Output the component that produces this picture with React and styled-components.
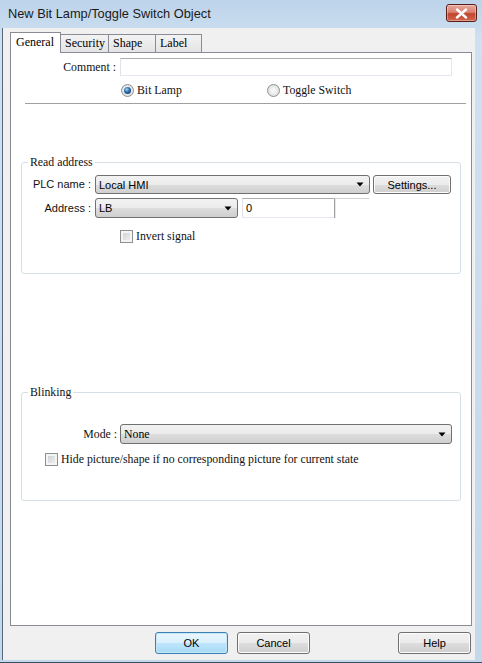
import styled, { createGlobalStyle } from "styled-components";

const GlobalStyle = createGlobalStyle`
  html, body {
    margin: 0;
    padding: 0;
    background: #ffffff;
  }
  * {
    box-sizing: border-box;
  }
`;

const serif = `"Liberation Serif", "Times New Roman", serif`;
const sans = `"Liberation Sans", Arial, sans-serif`;

const Window = styled.div`
  width: 482px;
  height: 663px;
  display: flex;
  flex-direction: column;
  background: linear-gradient(to bottom, #bcd3ea 0px, #cfe0f1 40px, #c4d8ec 100%);
  padding: 0 7px 2px 2px;
  border-bottom: 1px solid #3b4d60;
`;

const TitleBar = styled.div`
  height: 28px;
  flex: none;
  display: flex;
  justify-content: space-between;
  align-items: flex-start;
  margin-right: -2px;
  padding: 4px 0 0 6px;
`;

const Title = styled.span`
  font-family: ${sans};
  font-size: 12.8px;
  line-height: 20px;
  color: #1a1a1a;
`;

const CloseButton = styled.div`
  width: 31px;
  height: 18px;
  border: 1px solid #5a1e18;
  border-radius: 3px;
  background: linear-gradient(to bottom, #e8a89d 0%, #d9826f 45%, #c0452f 55%, #d2664e 100%);
  box-shadow: inset 0 0 0 1px rgba(255, 255, 255, 0.35);
  display: flex;
  align-items: center;
  justify-content: center;
`;

const Client = styled.div`
  flex: 1;
  display: flex;
  flex-direction: column;
  background: #f0f0f0;
  border-left: 1px solid #55687c;
  padding: 4px 3px 0 7px;
`;

const TabRow = styled.div`
  display: flex;
  align-items: flex-end;
  height: 21px;
  margin-bottom: -1px;
  position: relative;
  z-index: 1;
`;

const Tab = styled.div`
  width: ${(p) => p.$w}px;
  height: ${(p) => (p.$active ? 21 : 19)}px;
  margin-left: ${(p) => (p.$first ? 0 : -1)}px;
  padding-left: ${(p) => (p.$active ? 5 : 4)}px;
  font-family: ${serif};
  font-size: 12px;
  line-height: ${(p) => (p.$active ? 18 : 17)}px;
  color: #000;
  border: 1px solid #898c95;
  border-bottom: ${(p) => (p.$active ? "none" : "1px solid #898c95")};
  background: ${(p) =>
    p.$active ? "#ffffff" : "linear-gradient(to bottom, #f3f3f3, #e4e4e4)"};
`;

const Panel = styled.div`
  height: 574px;
  flex: none;
  background: #ffffff;
  border: 1px solid #898c95;
  display: flex;
  flex-direction: column;
`;

const Row = styled.div`
  display: flex;
  align-items: center;
  gap: ${(p) => p.$gap ?? 3}px;
  height: ${(p) => (p.$h ? `${p.$h}px` : "auto")};
  margin-top: ${(p) => p.$top ?? 0}px;
  padding-left: ${(p) => p.$indent ?? 0}px;
`;

const Label = styled.span`
  width: ${(p) => p.$w}px;
  flex: none;
  text-align: right;
  font-family: ${(p) => (p.$sans ? sans : serif)};
  font-size: ${(p) => (p.$sans ? 11 : 11.8)}px;
  line-height: 13px;
  color: #111;
  white-space: nowrap;
`;

const TextBox = styled.div`
  width: ${(p) => p.$w}px;
  height: ${(p) => p.$h}px;
  flex: none;
  background: #ffffff;
  border: 1px solid #e3e9ef;
  border-top-color: #abadb3;
  border-left-color: #e2e3ea;
  font-family: ${sans};
  font-size: 11px;
  line-height: ${(p) => p.$h - 2}px;
  padding-left: 3px;
  color: #000;
`;

const BlankBox = styled.div`
  width: ${(p) => p.$w}px;
  height: ${(p) => p.$h}px;
  flex: none;
  margin-left: -6px;
  position: relative;
  border-top: 1px solid #cfd3d8;
  border-left: 1px solid #a0a0a0;
`;

const Combo = styled.div`
  width: ${(p) => p.$w}px;
  height: ${(p) => p.$h}px;
  flex: none;
  display: flex;
  align-items: center;
  justify-content: space-between;
  padding: 0 5px 0 3px;
  border: 1px solid #707070;
  border-radius: 3px;
  background: linear-gradient(to bottom, #f2f2f2 0%, #ebebeb 50%, #dddddd 51%, #cfcfcf 100%);
  font-family: ${(p) => (p.$serif ? serif : sans)};
  font-size: ${(p) => (p.$serif ? 11.8 : 11)}px;
  color: #000;
`;

const Button = styled.div`
  width: ${(p) => p.$w}px;
  height: ${(p) => p.$h}px;
  flex: none;
  display: flex;
  align-items: center;
  justify-content: center;
  margin-left: ${(p) => (p.$push ? "auto" : `${p.$ml ?? 0}px`)};
  border: 1px solid ${(p) => (p.$default ? "#3c7fb1" : "#707070")};
  border-radius: 3px;
  background: ${(p) =>
    p.$default
      ? "linear-gradient(to bottom, #eaf6fd 0%, #d9f0fc 50%, #bee6fd 51%, #a7d9f5 100%)"
      : "linear-gradient(to bottom, #f2f2f2 0%, #ebebeb 50%, #dddddd 51%, #cfcfcf 100%)"};
  box-shadow: inset 0 0 0 1px ${(p) => (p.$default ? "#c4e8fa" : "#fcfcfc")};
  font-family: ${sans};
  font-size: 11px;
  color: #000;
`;

const Radio = styled.span`
  width: 13px;
  height: 13px;
  flex: none;
  border-radius: 50%;
  border: 1px solid #8e8f8f;
  background: radial-gradient(circle at 50% 50%, #f6f6f6 20%, #d4d4d4 100%);
  display: flex;
  align-items: center;
  justify-content: center;
  &::after {
    content: "";
    display: ${(p) => (p.$checked ? "block" : "none")};
    width: 7px;
    height: 7px;
    border-radius: 50%;
    background: radial-gradient(circle at 40% 35%, #9fd6f7 0%, #2a6aa8 45%, #0e2c4d 100%);
  }
`;

const Check = styled.span`
  width: 13px;
  height: 13px;
  flex: none;
  border: 1px solid #8e8f8f;
  background: linear-gradient(135deg, #c9ccd1 0%, #f4f4f4 100%);
  box-shadow: inset 0 0 0 2px #f4f4f4;
`;

const OptionText = styled.span`
  font-family: ${serif};
  font-size: 11.8px;
  line-height: 13px;
  color: #111;
  white-space: nowrap;
`;

const Option = styled.label`
  display: flex;
  align-items: center;
  gap: 3px;
  width: ${(p) => (p.$w ? `${p.$w}px` : "auto")};
`;

const Separator = styled.div`
  height: 2px;
  margin: 6px 5px 0 14px;
  border-top: 1px solid #a0a0a0;
  border-bottom: 1px solid #ffffff;
`;

const Group = styled.div`
  position: relative;
  height: ${(p) => p.$h}px;
  margin: ${(p) => p.$top}px 10px 0 10px;
  padding-top: ${(p) => p.$pad}px;
  border: 1px solid #d5dfe5;
  border-radius: 3px;
`;

const Legend = styled.span`
  position: absolute;
  top: -8px;
  left: 6px;
  padding: 0 2px;
  background: #ffffff;
  font-family: ${serif};
  font-size: 11.8px;
  line-height: 14px;
  color: #111;
`;

const Footer = styled.div`
  display: flex;
  align-items: center;
  gap: 9px;
  margin-top: 6px;
  padding: 0 1px 0 145px;
`;

const Arrow = () => (
  <svg width="8" height="5" viewBox="0 0 8 5">
    <polygon points="0.5,0.5 7.5,0.5 4,4.5" fill="#000" />
  </svg>
);

const CloseIcon = () => (
  <svg width="13" height="11" viewBox="0 0 13 11">
    <path
      d="M2 1.5 L11 9.5 M11 1.5 L2 9.5"
      stroke="#ffffff"
      strokeWidth="2.4"
      strokeLinecap="round"
    />
  </svg>
);

const tabs = [
  { name: "General", w: 51, active: true },
  { name: "Security", w: 49 },
  { name: "Shape", w: 48 },
  { name: "Label", w: 47 },
];

export default function App() {
  return (
    <>
      <GlobalStyle />
      <Window>
        <TitleBar>
          <Title>New Bit Lamp/Toggle Switch Object</Title>
          <CloseButton>
            <CloseIcon />
          </CloseButton>
        </TitleBar>
        <Client>
          <TabRow>
            {tabs.map((t, i) => (
              <Tab key={t.name} $w={t.w} $active={t.active} $first={i === 0}>
                {t.name}
              </Tab>
            ))}
          </TabRow>
          <Panel>
            <Row $top={5} $gap={4}>
              <Label $w={105}>Comment :</Label>
              <TextBox $w={332} $h={18} />
            </Row>
            <Row $top={8} $h={13} $indent={110} $gap={0}>
              <Option $w={146}>
                <Radio $checked />
                <OptionText>Bit Lamp</OptionText>
              </Option>
              <Option>
                <Radio />
                <OptionText>Toggle Switch</OptionText>
              </Option>
            </Row>
            <Separator />

            <Group $top={57} $h={112} $pad={12}>
              <Legend>Read address</Legend>
              <Row $gap={4} $h={19}>
                <Label $w={69} $sans>
                  PLC name :
                </Label>
                <Combo $w={275} $h={19}>
                  <span>Local HMI</span>
                  <Arrow />
                </Combo>
                <Button $w={78} $h={19} $ml={-1}>
                  Settings...
                </Button>
              </Row>
              <Row $top={4} $gap={4} $h={20}>
                <Label $w={69} $sans>
                  Address :
                </Label>
                <Combo $w={143} $h={20}>
                  <span>LB</span>
                  <Arrow />
                </Combo>
                <TextBox $w={94} $h={20}>
                  0
                </TextBox>
                <BlankBox $w={35} $h={20} />
              </Row>
              <Row $top={12} $h={13} $indent={98}>
                <Option>
                  <Check />
                  <OptionText>Invert signal</OptionText>
                </Option>
              </Row>
            </Group>

            <Group $top={118} $h={109} $pad={31}>
              <Legend>Blinking</Legend>
              <Row $gap={3} $h={20}>
                <Label $w={95}>Mode :</Label>
                <Combo $w={332} $h={20} $serif>
                  <span>None</span>
                  <Arrow />
                </Combo>
              </Row>
              <Row $top={9} $h={13} $indent={23}>
                <Option>
                  <Check />
                  <OptionText>
                    Hide picture/shape if no corresponding picture for current state
                  </OptionText>
                </Option>
              </Row>
            </Group>
          </Panel>
          <Footer>
            <Button $w={73} $h={22} $default>
              OK
            </Button>
            <Button $w={73} $h={22}>
              Cancel
            </Button>
            <Button $w={73} $h={22} $push>
              Help
            </Button>
          </Footer>
        </Client>
      </Window>
    </>
  );
}
